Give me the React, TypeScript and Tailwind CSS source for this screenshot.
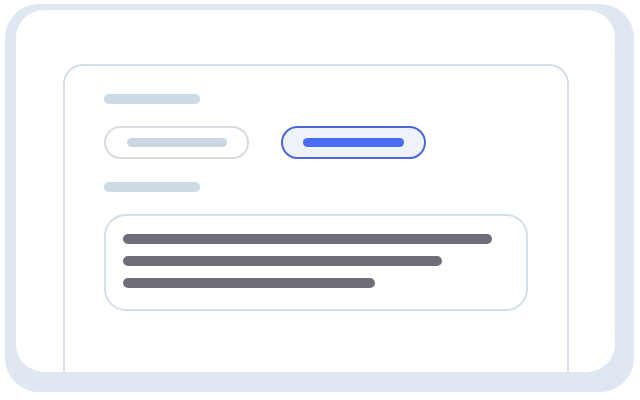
export default function App() {
  return (
    <div className="w-[640px] h-[400px] bg-white pt-[4px] pl-[5px] pr-[6px] pb-[8px] flex">
      {/* soft backdrop band */}
      <div className="flex-1 flex rounded-[34px] bg-[#dfe7f1] pt-[6px] pl-[11px] pr-[19px] pb-[20px]">
        {/* white card */}
        <div className="flex-1 flex flex-col rounded-[28px] bg-white overflow-hidden pt-[54px] pl-[47px] pr-[46px]">
          {/* window mock */}
          <div className="flex-1 flex flex-col border-2 border-b-0 border-[#d3dee8] rounded-t-[20px] pt-[28px] pl-[39px]">
            <div className="h-[10px] w-[96px] rounded-full bg-[#cdd9e3]" />

            <div className="flex gap-[32px] mt-[22px]">
              <div className="w-[145px] h-[33px] rounded-full border-2 border-[#d6dce2] flex items-center pl-[21px]">
                <div className="h-[9px] w-[100px] rounded-full bg-[#cad7e2]" />
              </div>
              <div className="w-[145px] h-[33px] rounded-full border-2 border-[#4a66d9] bg-[#eef3fb] flex items-center pl-[20px]">
                <div className="h-[9px] w-[101px] rounded-full bg-[#4a6cf0]" />
              </div>
            </div>

            <div className="h-[10px] w-[96px] rounded-full bg-[#cdd9e3] mt-[23px]" />

            <div className="w-[424px] h-[97px] mt-[22px] rounded-[22px] border-2 border-[#d3dee8] pt-[18px] pl-[17px] flex flex-col gap-[12px]">
              <div className="h-[10px] w-[369px] rounded-full bg-[#6e6e78]" />
              <div className="h-[10px] w-[319px] rounded-full bg-[#6e6e78]" />
              <div className="h-[10px] w-[252px] rounded-full bg-[#6e6e78]" />
            </div>
          </div>
        </div>
      </div>
    </div>
  );
}
